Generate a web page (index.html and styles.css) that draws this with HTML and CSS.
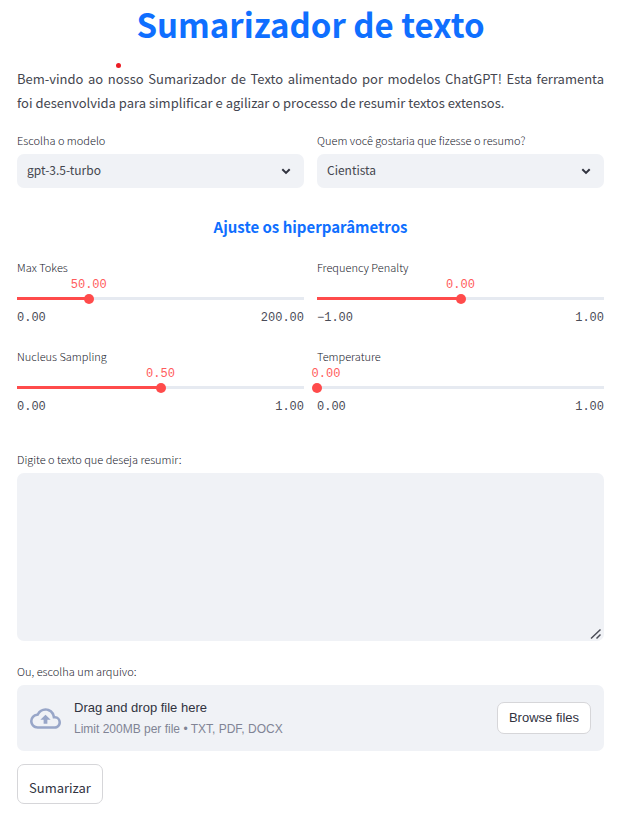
FILE: index.html
```html
<!DOCTYPE html>
<html lang="pt-BR">
<head>
<meta charset="utf-8">
<meta name="viewport" content="width=device-width, initial-scale=1">
<title>Sumarizador de texto</title>
<link rel="stylesheet" href="styles.css">
</head>
<body>
<main class="page">
  <h1 class="title">Sumarizador de texto</h1>
  <p class="intro">Bem-vindo ao nosso Sumarizador de Texto alimentado por modelos ChatGPT! Esta ferramenta foi&nbsp;desenvolvida para simplificar e agilizar o processo de resumir textos extensos.<span class="dot"></span></p>

  <div class="columns">
    <div class="field">
      <label class="label" for="model">Escolha o modelo</label>
      <div class="select">
        <select id="model"><option>gpt-3.5-turbo</option></select>
        <svg class="chevron" viewBox="0 0 10 10" aria-hidden="true"><path d="M1.3 3.2 5 6.9 8.7 3.2"/></svg>
      </div>
    </div>
    <div class="field">
      <label class="label" for="persona">Quem você gostaria que fizesse o resumo?</label>
      <div class="select">
        <select id="persona"><option>Cientista</option></select>
        <svg class="chevron" viewBox="0 0 10 10" aria-hidden="true"><path d="M1.3 3.2 5 6.9 8.7 3.2"/></svg>
      </div>
    </div>
  </div>

  <h2 class="subtitle">Ajuste os hiperparâmetros</h2>

  <div class="columns sliders">
    <div class="field">
      <label class="label" for="tokens">Max Tokes</label>
      <div class="slider" style="--pos: 25%">
        <output class="value" for="tokens">50.00</output>
        <input id="tokens" type="range" min="0" max="200" value="50">
        <div class="ticks"><span>0.00</span><span>200.00</span></div>
      </div>
    </div>
    <div class="field">
      <label class="label" for="penalty">Frequency Penalty</label>
      <div class="slider" style="--pos: 50%">
        <output class="value" for="penalty">0.00</output>
        <input id="penalty" type="range" min="-1" max="1" step="0.01" value="0">
        <div class="ticks"><span>−1.00</span><span>1.00</span></div>
      </div>
    </div>
    <div class="field">
      <label class="label" for="nucleus">Nucleus Sampling</label>
      <div class="slider" style="--pos: 50%">
        <output class="value" for="nucleus">0.50</output>
        <input id="nucleus" type="range" min="0" max="1" step="0.01" value="0.5">
        <div class="ticks"><span>0.00</span><span>1.00</span></div>
      </div>
    </div>
    <div class="field">
      <label class="label" for="temperature">Temperature</label>
      <div class="slider" style="--pos: 0%">
        <output class="value" for="temperature">0.00</output>
        <input id="temperature" type="range" min="0" max="1" step="0.01" value="0">
        <div class="ticks"><span>0.00</span><span>1.00</span></div>
      </div>
    </div>
  </div>

  <div class="field text-field">
    <label class="label" for="text">Digite o texto que deseja resumir:</label>
    <div class="textbox">
      <textarea id="text"></textarea>
      <svg class="grip" viewBox="0 0 12 12" aria-hidden="true"><path d="M1 10.5 10.5 1.5M6.5 10.5 10.5 6.5"/></svg>
    </div>
  </div>

  <div class="field">
    <label class="label" for="browse">Ou, escolha um arquivo:</label>
    <div class="dropzone">
      <svg class="cloud" viewBox="0 0 24 24" aria-hidden="true"><path d="M19.35 10.04A7.49 7.49 0 0 0 12 4C9.11 4 6.6 5.64 5.35 8.04A5.994 5.994 0 0 0 0 14c0 3.31 2.69 6 6 6h13c2.76 0 5-2.24 5-5 0-2.64-2.05-4.78-4.65-4.96zM19 18H6c-2.21 0-4-1.79-4-4 0-2.05 1.53-3.76 3.56-3.97l1.07-.11.5-.95A5.469 5.469 0 0 1 12 6c2.62 0 4.88 1.86 5.39 4.43l.3 1.5 1.53.11A2.98 2.98 0 0 1 22 15c0 1.65-1.35 3-3 3zM8 13h2.55v3h2.9v-3H16l-4-4z"/></svg>
      <div class="drop-text">
        <span class="drop-title">Drag and drop file here</span>
        <span class="drop-hint">Limit 200MB per file • TXT, PDF, DOCX</span>
      </div>
      <button id="browse" class="button browse" type="button">Browse files</button>
    </div>
  </div>

  <button class="button submit" type="button">Sumarizar</button>
</main>
</body>
</html>
```

FILE: styles.css
```css
* {
  box-sizing: border-box;
}

body {
  margin: 0;
  background: #fff;
  color: #31333f;
  font-family: "Noto Sans CJK SC", "Open Sans", sans-serif;
  font-size: 13px;
}

.page {
  padding: 0 28px 13px 17px;
}

.title,
.subtitle {
  margin: 0;
  color: #0f6fff;
  font-weight: 700;
  text-align: center;
}

.title {
  font-size: 33px;
  line-height: 48px;
}

.intro {
  position: relative;
  margin: 19px 0 16px;
  color: #44464f;
  line-height: 24px;
  text-align: justify;
}

.dot {
  position: absolute;
  top: -4px;
  left: 99px;
  width: 5px;
  height: 5px;
  border-radius: 50%;
  background: #ec1c24;
}

.columns {
  display: grid;
  grid-template-columns: 1fr 1fr;
  gap: 20px 13px;
}

.field {
  display: flex;
  flex-direction: column;
}

.label {
  padding-bottom: 5px;
  color: #20222c;
  font-size: 11px;
  font-weight: 300;
  line-height: 18px;
}

.select {
  position: relative;
}

select {
  display: block;
  width: 100%;
  height: 34px;
  padding: 0 30px 4px 10px;
  border: 0;
  border-radius: 7px;
  background: #f0f2f6;
  color: #44464f;
  font: inherit;
  font-size: 12px;
  appearance: none;
}

.chevron {
  position: absolute;
  top: 12px;
  right: 13px;
  width: 10px;
  height: 10px;
  fill: none;
  stroke: #31333f;
  stroke-width: 2;
  pointer-events: none;
}

.subtitle {
  margin: 27px 0 19px;
  font-size: 15px;
  line-height: 24px;
}

.sliders .label {
  padding: 0;
}

.slider {
  position: relative;
  padding-top: 15px;
  color: #4a4c58;
  font-family: "Liberation Mono", monospace;
  font-size: 12px;
  line-height: 16px;
}

.value {
  position: absolute;
  top: 1px;
  left: max(var(--pos), 9px);
  transform: translateX(-50%);
  color: #ff5c5c;
}

input[type="range"] {
  display: block;
  width: calc(100% + 10px);
  height: 15px;
  margin: 0 -5px;
  background: linear-gradient(to right, #ff4b4b var(--pos), #e6eaf1 var(--pos)) center / calc(100% - 10px) 3px no-repeat;
  appearance: none;
}

input[type="range"]::-webkit-slider-thumb {
  width: 10px;
  height: 10px;
  border-radius: 50%;
  background: #ff4b4b;
  appearance: none;
}

.ticks {
  display: flex;
  justify-content: space-between;
  padding-top: 4px;
  padding-bottom: 1px;
}

.text-field {
  margin: 34px 0 21px;
}

.textbox {
  position: relative;
}

textarea {
  display: block;
  width: 100%;
  height: 168px;
  padding: 10px;
  border: 0;
  border-radius: 7px;
  background: #f0f2f6;
  color: inherit;
  font: inherit;
  resize: vertical;
}

textarea::-webkit-resizer {
  background: transparent;
}

.grip {
  position: absolute;
  right: 2px;
  bottom: 1px;
  width: 12px;
  height: 12px;
  fill: none;
  stroke: #4b4d57;
  stroke-width: 1.5;
  pointer-events: none;
}

.dropzone {
  display: flex;
  align-items: center;
  gap: 13px;
  padding: 12px 13px;
  border-radius: 7px;
  background: #f0f2f6;
  font-family: "Liberation Sans", Arial, sans-serif;
}

.cloud {
  flex: none;
  width: 31px;
  height: 31px;
  fill: #98a6c8;
}

.drop-text {
  display: flex;
  flex: 1;
  flex-direction: column;
}

.drop-title {
  font-size: 13px;
  line-height: 22px;
}

.drop-hint {
  color: #808495;
  font-size: 12px;
  line-height: 20px;
}

.button {
  border: 1px solid #d6d6d9;
  border-radius: 7px;
  background: #fff;
  color: inherit;
  font-size: 13px;
}

.browse {
  height: 32px;
  padding: 0 11px 2px;
  font-family: inherit;
}

.submit {
  display: block;
  height: 40px;
  margin-top: 13px;
  padding: 6px 11px 0;
  font-family: inherit;
}
```
